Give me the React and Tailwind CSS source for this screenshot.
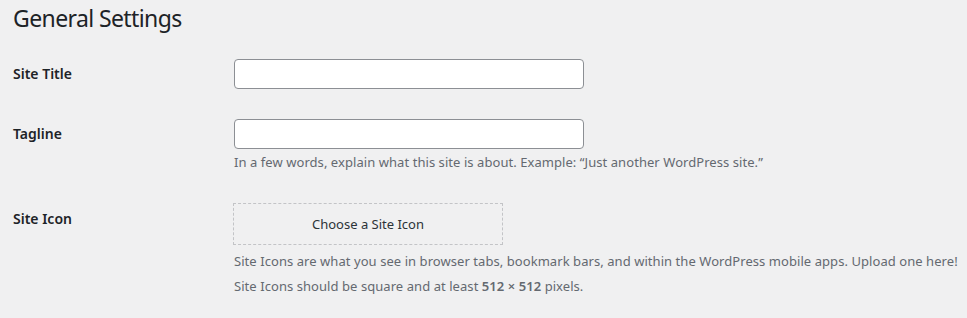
import React from "react";

export default function App() {
  return (
    <div className="min-h-[318px] w-full bg-[#f0f0f1] pl-[13px] text-[#1d2327]" style={{ fontFamily: '"Noto Sans", sans-serif' }}>
      <h1 className="pt-[4px] text-[23px] font-normal leading-[29px] tracking-[-0.6px] text-[#1d2327]">General Settings</h1>

      <div className="mt-[26px] flex items-start">
        <div className="w-[221px] pt-[5px] text-[14px] font-semibold leading-[20px]">Site Title</div>
        <input type="text" className="h-[30px] w-[350px] rounded-[4px] border border-[#8c8f94] bg-white" />
      </div>

      <div className="mt-[30px] flex items-start">
        <div className="w-[221px] pt-[5px] text-[14px] font-semibold leading-[20px]">Tagline</div>
        <div>
          <input type="text" className="h-[30px] w-[350px] rounded-[4px] border border-[#8c8f94] bg-white" />
          <p className="mt-[3px] text-[13px] leading-[20px] tracking-[0.06px] text-[#646970]">
            In a few words, explain what this site is about. Example: “Just another WordPress site.”
          </p>
        </div>
      </div>

      <div className="mt-[31px] flex items-start">
        <div className="w-[220px] pt-[6px] text-[14px] font-semibold leading-[20px]">Site Icon</div>
        <div>
          <button
            type="button"
            className="flex h-[42px] w-[270px] items-center justify-center border border-dashed border-[#c3c4c7] bg-transparent pt-px text-[13px] text-[#2c3338]"
          >
            Choose a Site Icon
          </button>
          <p className="mt-[6px] pl-px text-[13px] leading-[20px] tracking-[0.06px] text-[#646970]">
            Site Icons are what you see in browser tabs, bookmark bars, and within the WordPress mobile apps. Upload one here!
          </p>
          <p className="mt-[5px] pl-px text-[13px] leading-[20px] tracking-[0.06px] text-[#646970]">
            Site Icons should be square and at least <strong className="font-semibold">512 × 512</strong> pixels.
          </p>
        </div>
      </div>
    </div>
  );
}
